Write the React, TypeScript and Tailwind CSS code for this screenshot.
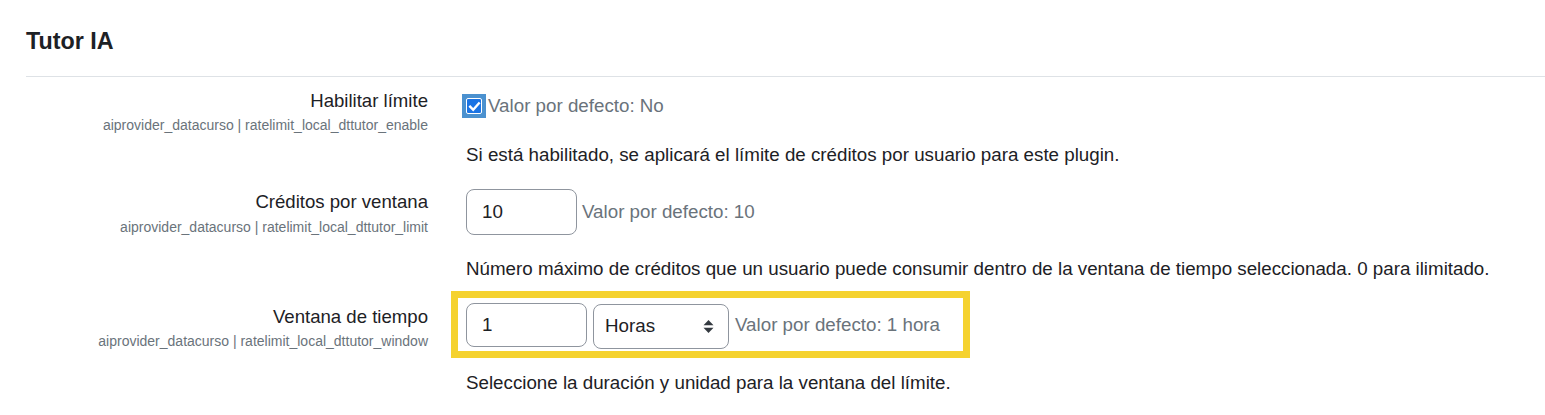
import React from "react";

const font = { fontFamily: '"Liberation Sans", Arial, sans-serif' };

function Label({ title, sub, mt, subMt }: { title: string; sub: string; mt: string; subMt: string }) {
  return (
    <div className={`w-[402px] shrink-0 text-right ${mt}`}>
      <div className="text-[18.6px] leading-[24px] text-[#1d2125]">{title}</div>
      <div className={`text-[14px] leading-[20px] text-[#6a737b] ${subMt}`}>{sub}</div>
    </div>
  );
}

export default function App() {
  return (
    <div className="w-[1545px] h-[415px] bg-white pl-[26px] overflow-hidden" style={font}>
      <h3 className="pt-[27px] text-[23.3px] font-bold leading-[28px] text-[#1d2125]">Tutor IA</h3>
      <div className="mt-[21px] border-t border-[#dee2e6]" />

      {/* Row 1 */}
      <div className="flex mt-[12px]">
        <Label title="Habilitar límite" sub="aiprovider_datacurso | ratelimit_local_dttutor_enable" mt="" subMt="mt-[2px]" />
        <div className="ml-[38px]">
          <div className="flex items-center mt-[5px] h-[24px]">
            <div className="-ml-[4px] w-[24px] h-[24px] bg-[#4b91cf] flex items-center justify-center">
              <div className="w-[16px] h-[16px] rounded-[2px] border border-white bg-[#1b74e4] flex items-center justify-center">
                <svg width="13" height="13" viewBox="0 0 12 12">
                  <path d="M2 6.2 L4.8 9 L10 3.2" fill="none" stroke="white" strokeWidth="2.2" strokeLinecap="square" />
                </svg>
              </div>
            </div>
            <span className="ml-[2px] text-[18.75px] leading-[24px] text-[#6a737b]">Valor por defecto: No</span>
          </div>
          <p className="mt-[25px] text-[18.75px] leading-[24px] text-[#1d2125]">
            Si está habilitado, se aplicará el límite de créditos por usuario para este plugin.
          </p>
        </div>
      </div>

      {/* Row 2 */}
      <div className="flex mt-[22px]">
        <Label title="Créditos por ventana" sub="aiprovider_datacurso | ratelimit_local_dttutor_limit" mt="mt-[1px]" subMt="mt-[3px]" />
        <div className="ml-[38px]">
          <div className="flex items-center">
            <div className="w-[111px] h-[46px] rounded-[8px] border border-[#8f959e] flex items-center pl-[15px] text-[18.75px] text-[#1d2125]">
              10
            </div>
            <span className="ml-[5px] text-[18.75px] leading-[24px] text-[#6a737b]">Valor por defecto: 10</span>
          </div>
          <p className="mt-[22px] text-[18.75px] leading-[24px] text-[#1d2125]">
            Número máximo de créditos que un usuario puede consumir dentro de la ventana de tiempo seleccionada. 0 para ilimitado.
          </p>
        </div>
      </div>

      {/* Row 3 */}
      <div className="flex mt-[10px]">
        <Label title="Ventana de tiempo" sub="aiprovider_datacurso | ratelimit_local_dttutor_window" mt="mt-[14px]" subMt="mt-[2px]" />
        <div className="ml-[38px]">
          <div className="-ml-[15px] w-[519px] h-[67px] border-[7px] border-[#f5d22f] flex items-start pl-[8px] pt-[5px]">
            <div className="w-[121px] h-[44px] rounded-[8px] border border-[#8f959e] flex items-center pl-[15px] text-[18.75px] text-[#1d2125]">
              1
            </div>
            <div className="ml-[6px] mt-[1px] w-[136px] h-[45px] rounded-[8px] border border-[#8f959e] flex items-center justify-between pl-[11px] pr-[14px] text-[18.75px] text-[#1d2125]">
              <span>Horas</span>
              <svg width="11" height="15" viewBox="0 0 11 15">
                <path d="M5.5 1 L10.5 6.3 L0.5 6.3 Z" fill="#343a40" />
                <path d="M5.5 14 L10.5 8.7 L0.5 8.7 Z" fill="#343a40" />
              </svg>
            </div>
            <span className="ml-[6px] mt-[10px] text-[18.75px] leading-[24px] text-[#6a737b]">Valor por defecto: 1 hora</span>
          </div>
          <p className="mt-[13px] text-[18.75px] leading-[24px] text-[#1d2125]">
            Seleccione la duración y unidad para la ventana del límite.
          </p>
        </div>
      </div>
    </div>
  );
}
